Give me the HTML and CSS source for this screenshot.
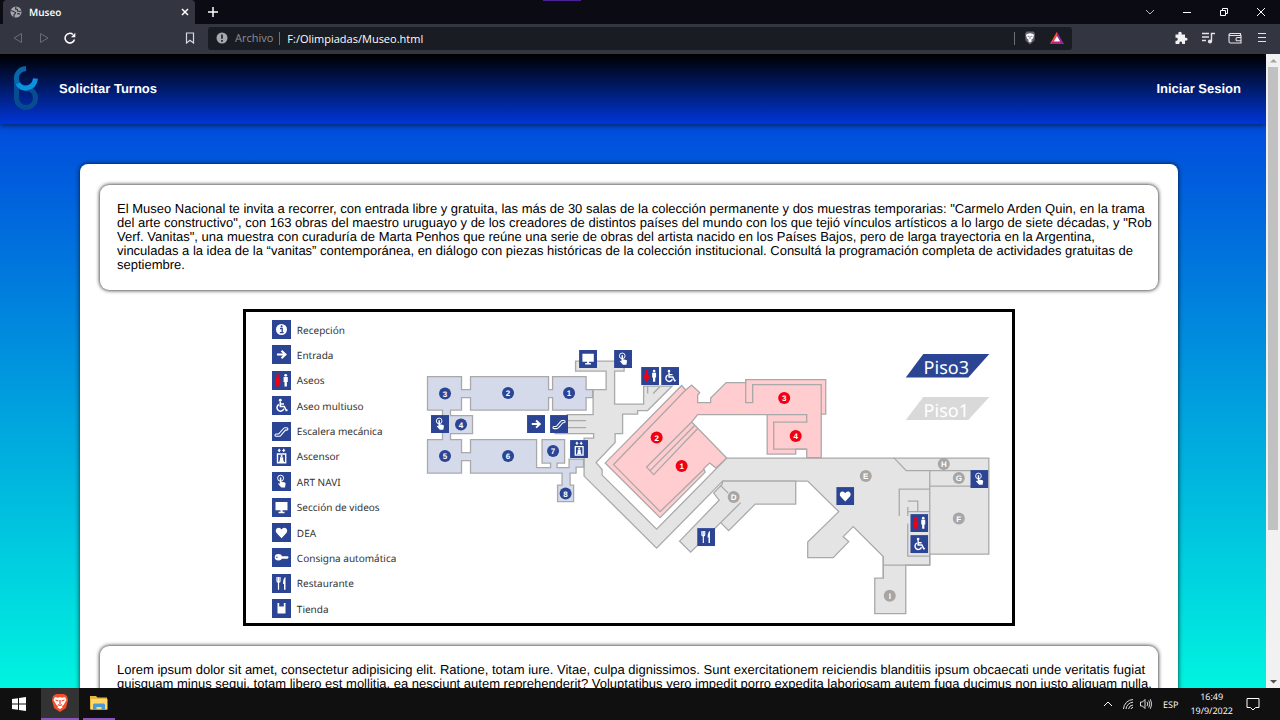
FILE: index.html
```html
<!DOCTYPE html>
<html lang="es">
<head>
<meta charset="utf-8">
<title>Museo</title>
<link rel="stylesheet" href="styles.css">
</head>
<body>
<svg class="defs" aria-hidden="true">
  <defs>
    <symbol id="i-info" viewBox="0 0 19 19"><rect width="19" height="19" fill="#2b4594"/><circle cx="9.500" cy="9.500" r="5.500" fill="#fff"/><path d="M8 8.500h2.200v4M7.800 12.700h3.800" stroke="#2b4594" stroke-width="1.300" fill="none"/><circle cx="9.600" cy="6.300" r="1" fill="#2b4594"/></symbol>
    <symbol id="i-arrow" viewBox="0 0 19 19"><rect width="19" height="19" fill="#2b4594"/><path d="M5 9.500h8M9.500 5.700l4 3.800-4 3.800" stroke="#fff" stroke-width="2" fill="none"/></symbol>
    <symbol id="i-wc" viewBox="0 0 19 19"><rect width="19" height="19" fill="#2b4594"/><circle cx="5.700" cy="4.500" r="1.600" fill="#f00010"/><path d="M5.700 4.500l3 5.500-1.900 5.500H4.600L2.700 10z" fill="#f00010"/><circle cx="13.700" cy="4.300" r="1.400" fill="#fff"/><path d="M11.600 6h4.200v5h-.9v4.500h-2.400V11h-.9z" fill="#fff"/></symbol>
    <symbol id="i-chair" viewBox="0 0 19 19"><rect width="19" height="19" fill="#2b4594"/><circle cx="8.300" cy="4.200" r="1.400" fill="#fff"/><path d="M8.300 5.500v5h4l2 4 1.200-.5M8.500 8h3.500M7 8.500a3.500 3.500 0 1 0 4.800 4.300" stroke="#fff" stroke-width="1.500" fill="none"/></symbol>
    <symbol id="i-stairs" viewBox="0 0 19 19"><rect width="19" height="19" fill="#2b4594"/><path d="M4.200 12h1.800q1 0 1.500-1l3.500-4q.8-1.300 2-1.300h1.700q1.200 0 1.200 1.200t-1.200 1.200h-1.200L9.500 12.700q-1 1.600-2.300 1.600h-3q-1.200 0-1.200-1.100t1.200-1.200z" stroke="#fff" stroke-width="1.100" fill="none"/></symbol>
    <symbol id="i-lift" viewBox="0 0 19 19"><rect width="19" height="19" fill="#2b4594"/><path d="M7.200 1.500l1.800 2.200H7.900v1.200H6.500V3.700H5.400zM11.700 5.200L9.900 3h1.100V1.800h1.400V3h1.100z" fill="#fff"/><path d="M5.500 7h8.200v8.800H5.500z" stroke="#fff" stroke-width="1.400" fill="none"/><circle cx="9.600" cy="9" r="1.100" fill="#fff"/><path d="M8 10.300h3.200v2.500l1 2.500H7l1-2.500z" fill="#fff"/></symbol>
    <symbol id="i-touch" viewBox="0 0 19 19"><rect width="19" height="19" fill="#2b4594"/><circle cx="8.600" cy="6.200" r="3" stroke="#fff" fill="none"/><path d="M7.800 5.800q.8-1 1.600 0v4l3.500.8q.8.300.7 1.200l-.6 3.700H9.300L6 11.700q.2-.9 1.800.1z" fill="#fff"/></symbol>
    <symbol id="i-tv" viewBox="0 0 19 19"><rect width="19" height="19" fill="#2b4594"/><path d="M3.500 4h12v8.300h-5v1.500h2v1.400h-6v-1.400h2v-1.500h-5z" fill="#fff"/></symbol>
    <symbol id="i-heart" viewBox="0 0 19 19"><rect width="19" height="19" fill="#2b4594"/><path d="M9.500 15.200L4.600 10C2.800 7.500 4.300 4.700 6.600 4.700q2 0 2.900 1.700.9-1.700 2.900-1.700c2.300 0 3.800 2.800 2 5.300z" fill="#fff"/></symbol>
    <symbol id="i-key" viewBox="0 0 19 19"><rect width="19" height="19" fill="#2b4594"/><ellipse cx="6.400" cy="9.300" rx="3.600" ry="3.200" fill="#fff"/><path d="M9 8.300h7l.6 1.200-1 1.200H9z" fill="#fff"/><circle cx="4.900" cy="9.300" r=".8" fill="#2b4594"/></symbol>
    <symbol id="i-fork" viewBox="0 0 19 19"><rect width="19" height="19" fill="#2b4594"/><path d="M5 3v4q0 1.200 1 1.200h1q1 0 1-1.200V3M6.500 3v12.800" stroke="#fff" stroke-width="1.200" fill="none"/><path d="M13.500 3v12.800h-1.500V10H11q0-6 2.500-7z" fill="#fff"/></symbol>
    <symbol id="i-shop" viewBox="0 0 19 19"><rect width="19" height="19" fill="#2b4594"/><path d="M5.500 4h1.700v3.500h4.600V4h1.700v10.500h-8z" fill="#fff"/></symbol>
  </defs>
</svg>

<header class="chrome">
  <div class="tabs">
    <div class="tab">
      <svg class="ic12" viewBox="0 0 12 12"><circle cx="6" cy="6" r="5.500" fill="#a6a8b0"/><path d="M1 4.500l2.500 1 2 1-.5 1.500-1 .5V11M6 1l-.5 2 2 .5V5l2 .5L11 5M7 8l2-.5.800 1" stroke="#333541" stroke-width="1.200" fill="none"/></svg>
      <span class="tab-title">Museo</span>
      <button class="bare" aria-label="Cerrar pestaña"><svg class="ic8" viewBox="0 0 8 8"><path d="M1 1l6 6M7 1L1 7" stroke="#fff" stroke-width="1.500"/></svg></button>
    </div>
    <button class="bare newtab" aria-label="Nueva pestaña"><svg class="ic10" viewBox="0 0 10 10"><path d="M5 0v10M0 5h10" stroke="#fff" stroke-width="1.500"/></svg></button>
    <span class="accent"></span>
    <div class="winbtns">
      <button class="bare" aria-label="Buscar pestañas"><svg class="ic10" viewBox="0 0 10 10"><path d="M1 3l4 4 4-4" stroke="#b5b5bb" fill="none"/></svg></button>
      <button class="bare" aria-label="Minimizar"><svg class="ic10" viewBox="0 0 10 10"><path d="M1 5.500h8" stroke="#fff"/></svg></button>
      <button class="bare" aria-label="Restaurar"><svg class="ic10" viewBox="0 0 10 10"><path d="M1.500 3.500h5v5h-5zM3.500 3V1.500h5v5H7" stroke="#fff" fill="none"/></svg></button>
      <button class="bare" aria-label="Cerrar"><svg class="ic10" viewBox="0 0 10 10"><path d="M1 1l8 8M9 1L1 9" stroke="#fff"/></svg></button>
    </div>
  </div>
  <div class="toolbar">
    <div class="nav-btns">
      <button class="bare" aria-label="Atrás"><svg class="ic12" viewBox="0 0 12 12"><path d="M9.500 1.500v9L2 6z" stroke="#696b76" fill="none"/></svg></button>
      <button class="bare" aria-label="Adelante"><svg class="ic12" viewBox="0 0 12 12"><path d="M2.500 1.500v9L10 6z" stroke="#696b76" fill="none"/></svg></button>
      <button class="bare" aria-label="Recargar"><svg class="ic12" viewBox="0 0 12 12"><path d="M10.500 7.500A4.800 4.800 0 1 1 9 2.500" stroke="#fff" stroke-width="1.500" fill="none"/><path d="M11.300.8v4.400H7z" fill="#fff"/></svg></button>
    </div>
    <button class="bare mark" aria-label="Marcador"><svg class="ic12" viewBox="0 0 12 12"><path d="M2.500 1h7v10L6 8.300 2.500 11z" stroke="#d8d9df" stroke-width="1.200" fill="none"/></svg></button>
    <div class="address">
      <svg class="ic12" viewBox="0 0 12 12"><circle cx="6" cy="6" r="5.500" fill="#a6a8b0"/><path d="M6 2.500v4.300M6 8v1.700" stroke="#191c22" stroke-width="1.600"/></svg>
      <label class="scheme" for="url">Archivo</label>
      <span class="sep"></span>
      <input id="url" class="url" type="text" value="F:/Olimpiadas/Museo.html">
      <span class="sep"></span>
      <svg class="ic14 shield" viewBox="0 0 14 14"><path d="M3.500.5h7l1.500 2-.5 7L7 13.500 2.500 9.500l-.5-7z" fill="#62646f"/><path d="M4 3l3-.7 3 .7 1 1-1 3.500L8 9l1 1-2 1.500L5 10l1-1-2-1.500L3 4z" fill="#fff"/><path d="M4.500 5l2 .5M9.500 5l-2 .5M7 6v2" stroke="#62646f" stroke-width=".8"/></svg>
      <svg class="ic14" viewBox="0 0 14 14"><path d="M7 .8L0 13h14z" fill="#862a91"/><path d="M7 .8V5L3.800 10.700 0 13z" fill="#ff4a2d"/><path d="M0 13l3.800-2.500h6.400L14 13z" fill="#b02387"/><path d="M7 5l-3.200 5.500h6.400z" fill="#fff"/></svg>
    </div>
    <div class="tools">
      <button class="bare" aria-label="Extensiones"><svg class="ic14" viewBox="0 0 14 14"><path d="M1.500 3.500h3C3.800 1.500 5 .8 6 .8s2.200.7 1.500 2.700H11v3.300c2-.6 2.500.5 2.500 1.400S12.700 10 11 9.500V13H8c.5-1.700-.3-2.500-1.200-2.500S5 11.300 5.500 13h-4V9.800c1.700.3 2.300-.6 2.300-1.500s-.8-1.700-2.300-1.400z" fill="#f2f2f4"/></svg></button>
      <button class="bare" aria-label="Reproducción"><svg class="ic14" viewBox="0 0 14 14"><path d="M1 2.500h7M1 6h7M1 9.500h4M10.500 10V2.500H14" stroke="#e4e4e8" stroke-width="1.400" fill="none"/><circle cx="9" cy="10.500" r="2.100" fill="#e4e4e8"/></svg></button>
      <button class="bare" aria-label="Cartera"><svg class="ic14" viewBox="0 0 14 14"><path d="M12.500 4.500v-2h-10q-1.500 0-1.500 1t1.500 1h10.500v7.500H2.500Q1 12 1 10.500v-7M13 6.500H9.500q-1.500 0-1.500 1.700t1.500 1.600H13" stroke="#e4e4e8" stroke-width="1.100" fill="none"/></svg></button>
      <button class="bare" aria-label="Menú"><svg class="ic14" viewBox="0 0 14 14"><path d="M3 2.500h8M3 6.500h8M3 10.500h8" stroke="#e4e4e8" stroke-width="1.200"/></svg></button>
    </div>
  </div>
</header>

<div class="viewport">
  <div class="page">
    <nav class="topnav">
      <svg class="logo" viewBox="0 0 28 46"><path d="M4.500 12v21a9.500 9.500 0 1 0 9.500-9.500" stroke="#074b91" stroke-width="5" fill="none"/><path d="M14 3.500C8 4 4 8.500 4.500 14q.7 8.500 9.500 9.500" stroke="#0866ab" stroke-width="5" fill="none"/><path d="M6 18.500q2.500 5 8.500 4.500 8-.8 9-9.500" stroke="#0a94df" stroke-width="5" fill="none"/></svg>
      <a class="navlink" href="#turnos">Solicitar Turnos</a>
      <a class="navlink login" href="#sesion">Iniciar Sesion</a>
    </nav>
    <main class="sheet">
      <p class="card">El Museo Nacional te invita a recorrer, con entrada libre y gratuita, las más de 30 salas de la colección permanente y dos muestras temporarias: "Carmelo Arden Quin, en la trama del arte constructivo", con 163 obras del maestro uruguayo y de los creadores de distintos países del mundo con los que tejió vínculos artísticos a lo largo de siete décadas, y "Rob Verf. Vanitas", una muestra con curaduría de Marta Penhos que reúne una serie de obras del artista nacido en los Países Bajos, pero de larga trayectoria en la Argentina, vinculadas a la idea de la “vanitas” contemporánea, en diálogo con piezas históricas de la colección institucional. Consultá la programación completa de actividades gratuitas de septiembre.</p>
      <figure class="map">
        <ul class="legend">
          <li><svg class="sign"><use href="#i-info"/></svg>Recepción</li>
          <li><svg class="sign"><use href="#i-arrow"/></svg>Entrada</li>
          <li><svg class="sign"><use href="#i-wc"/></svg>Aseos</li>
          <li><svg class="sign"><use href="#i-chair"/></svg>Aseo multiuso</li>
          <li><svg class="sign"><use href="#i-stairs"/></svg>Escalera mecánica</li>
          <li><svg class="sign"><use href="#i-lift"/></svg>Ascensor</li>
          <li><svg class="sign"><use href="#i-touch"/></svg>ART NAVI</li>
          <li><svg class="sign"><use href="#i-tv"/></svg>Sección de videos</li>
          <li><svg class="sign"><use href="#i-heart"/></svg>DEA</li>
          <li><svg class="sign"><use href="#i-key"/></svg>Consigna automática</li>
          <li><svg class="sign"><use href="#i-fork"/></svg>Restaurante</li>
          <li><svg class="sign"><use href="#i-shop"/></svg>Tienda</li>
        </ul>
        <svg class="plan" viewBox="420 312 592 311" role="img" aria-label="Plano del piso 3">
          <!-- halls -->
          <g class="hall">
            <path d="M575.500 361H624V371H614.500V404H643.500V386H672L647.500 410.500H637.500V414H622.500V433.500H615V442.500L596 462.500 602 469.500V475L656.500 529 726.500 458H988.500V554H929.500V565H905.500V613.500H874.500V578H883V556.500L853 526.500 843 536.500 848.500 541.500 833 557.500H807.500V542L838.500 511.500 807.500 481H722.500L656.500 548 584 476V438H593.500V433.500H555V430H567V414.500H593V389.500H606V371H575.500Z"/>
            <path d="M722.500 481H795.500V504H755L728.500 530.500 720.500 522.500 690.500 552 679.500 541 719 500 713.500 493 722 484Z"/>
          </g>
          <g class="line">
            <path d="M567 420.500H586M567 427.500H586M720.500 522.500L740.500 502.500M720 485L728 493M647.500 386V393.500M653 393.500L659.500 387"/>
            <path d="M893.500 457.500L906 470.500H988.500M929.500 470.500V565M929.500 486H988.500M899 516V489H929.500M907.500 501H917.500V511.500M907.500 507V516M907.500 511.500H929.500M907.500 523.500V556H929.500M883 565H929.500M883 556V578"/>
          </g>
          <!-- blue wing -->
          <path class="blue" d="M427.500 376.500H461.500V389.500H470.500V376.500H548.500V389.500H552.500V376.500H586V389.500H592.500V397.500H586V410H552.500V397.500H548.500V410H470.500V397.500H461.500V410H450.500V415.500H472.500V433.500H450.500V439.500H461.500V452.500H470.500V439.500H536.500V467.500H550.500V463H542V439.500H564.500V463H557V467.500H569V459H583.500V467H576V473H570V485H573.500V501.500H557.500V485H562V473H470.500V460.500H461.500V473H427.500V439.500H442.500V410H427.500Z"/>
          <!-- pink wing -->
          <path class="pink" d="M605 463L681.500 385.500 685.500 390 691.500 385 699.500 392.500 697.500 395V402.500H710.500V398L726 382.500H745.500V379.500H825.500V414H821V457.500H806.500V449H795.500V454H767V414.500H697.500L691.500 422 726.500 458 716 468 709.500 463 703.500 468.500 705 472 660 517.500Z"/>
          <g class="line">
            <path d="M685.500 390L613.500 464.500 660 511.500 704 469M691.500 422L646.500 467 653.500 474.500 697.500 428.500M650 470.500L694.500 425.500"/>
            <path d="M745.500 382V402.500H752.500V384.500H821V414M767 414.500H806.500V422H773.500V449H806.500"/>
          </g>
          <path d="M923 354H989L968 377.500H905.500Z" fill="#2b4594"/>
          <path d="M923 397H989L968 420H905.500Z" fill="#d9d9d9"/>
          <text class="floor" x="946" y="374">Piso3</text>
          <text class="floor" x="946" y="417">Piso1</text>
          <!-- room markers -->
          <g fill="#2b4594"><circle cx="445" cy="393.500" r="6"/><circle cx="508" cy="393" r="6"/><circle cx="569" cy="393" r="6"/><circle cx="461" cy="424.500" r="6"/><circle cx="445" cy="456" r="6"/><circle cx="508" cy="456" r="6"/><circle cx="553" cy="451" r="6"/><circle cx="565.500" cy="493.500" r="6"/></g>
          <g fill="#f00010"><circle cx="656.500" cy="437.500" r="6"/><circle cx="681.500" cy="466" r="6"/><circle cx="784" cy="398" r="6"/><circle cx="795.500" cy="436" r="6"/></g>
          <g fill="#a6a6a6"><circle cx="733.500" cy="497" r="6"/><circle cx="865.500" cy="476" r="6"/><circle cx="943.500" cy="464" r="6"/><circle cx="958.500" cy="478" r="6"/><circle cx="958.500" cy="518.500" r="6"/><circle cx="889.500" cy="595.500" r="6"/></g>
          <g class="num"><text x="445" y="397">3</text><text x="508" y="396">2</text><text x="569" y="396">1</text><text x="461" y="428">4</text><text x="445" y="459">5</text><text x="508" y="459">6</text><text x="553" y="454">7</text><text x="565.500" y="497">8</text><text x="656.500" y="441">2</text><text x="681.500" y="469">1</text><text x="784" y="401">3</text><text x="795.500" y="439">4</text><text x="733.500" y="500">D</text><text x="865.500" y="479">E</text><text x="943.500" y="467">H</text><text x="958.500" y="481">G</text><text x="958.500" y="522">F</text><text x="889.500" y="599">I</text></g>
          <!-- service signs -->
          <use href="#i-tv" x="579" y="350" width="18" height="18"/><use href="#i-touch" x="614" y="350" width="18" height="18"/>
          <use href="#i-wc" x="641" y="367" width="18" height="18"/><use href="#i-chair" x="661" y="367" width="18" height="18"/>
          <use href="#i-touch" x="431" y="415" width="18" height="18"/><use href="#i-arrow" x="527" y="415" width="18" height="18"/>
          <use href="#i-stairs" x="550" y="415" width="18" height="18"/><use href="#i-lift" x="570" y="440" width="18" height="18"/>
          <use href="#i-heart" x="836" y="487" width="18" height="18"/><use href="#i-touch" x="970" y="470" width="18" height="18"/>
          <use href="#i-wc" x="910" y="514" width="18" height="18"/><use href="#i-chair" x="910" y="535" width="18" height="18"/>
          <use href="#i-fork" x="697" y="528" width="18" height="18"/>
        </svg>
      </figure>
      <p class="card">Lorem ipsum dolor sit amet, consectetur adipisicing elit. Ratione, totam iure. Vitae, culpa dignissimos. Sunt exercitationem reiciendis blanditiis ipsum obcaecati unde veritatis fugiat quisquam minus sequi, totam libero est mollitia, ea nesciunt autem reprehenderit? Voluptatibus vero impedit porro expedita laboriosam autem fuga ducimus non iusto aliquam nulla.</p>
    </main>
  </div>
  <div class="scrollbar" aria-hidden="true">
    <svg class="arrow" viewBox="0 0 13 13"><path d="M3 8.500h7L6.500 5z" fill="#a3a3a3"/></svg>
    <span class="thumb"></span>
    <svg class="arrow" viewBox="0 0 13 13"><path d="M3 5h7L6.500 8.500z" fill="#505050"/></svg>
  </div>
</div>

<footer class="taskbar">
  <button class="bare task" aria-label="Inicio"><svg class="ic14" viewBox="0 0 14 14"><path d="M0 2l6-.8v5.300H0zM7 1l7-1v6.500H7zM0 7.500h6v5.300L0 12zM7 7.500h7V14l-7-1z" fill="#fff"/></svg></button>
  <button class="bare task current" aria-label="Brave"><svg class="ic20" viewBox="0 0 20 20"><path d="M6 1h8l3 2 1 4-2 8-6 4-6-4L2 7l1-4z" fill="#f2502a"/><path d="M5 4l3 .7L10 4l2 .7L15 4l1.500 3-3 5-1.500 1 .5 1.500L10 16l-2.500-1.500L8 13l-1.500-1-3-5z" fill="#fff"/><path d="M5.500 7l3 1M14.500 7l-3 1M10 7v4M8 11.500l2 1 2-1" stroke="#f2502a" stroke-width="1.300" fill="none"/></svg></button>
  <button class="bare task running" aria-label="Explorador de archivos"><svg class="ic20" viewBox="0 0 20 20"><path d="M1 3h6l1.500 1.500H18v12H1z" fill="#e9b440"/><path d="M2 6h16.500v10.500H2z" fill="#ffd868"/><path d="M4 17v-5q0-1.500 1.500-1.500h9q1.500 0 1.500 1.500v5h-3.500v-3h-5v3z" fill="#4a9bd1"/></svg></button>
  <div class="tray">
    <button class="bare" aria-label="Mostrar iconos ocultos"><svg class="ic10" viewBox="0 0 10 10"><path d="M1 7l4-4 4 4" stroke="#fff" fill="none"/></svg></button>
    <svg class="ic12" viewBox="0 0 12 12"><path d="M1.500 11A10 10 0 0 1 11 1.500M4 11a7.500 7.500 0 0 1 7-6.800M6.500 11A5 5 0 0 1 11 7M9 11q.5-1.500 2-1.700" stroke="#ddd" fill="none"/></svg>
    <svg class="ic12" viewBox="0 0 12 12"><path d="M.5 4h2L5 1.500v9L2.500 8h-2zM7 4q1.500 2 0 4M8.700 2.500q2.500 3.500 0 7M10.300 1.200q3 4.800 0 9.600" stroke="#eee" stroke-width=".9" fill="none"/></svg>
    <span class="lang">ESP</span>
    <time class="clock" datetime="2022-09-19T16:49"><span>16:49</span><span>19/9/2022</span></time>
    <button class="bare" aria-label="Notificaciones"><svg class="ic14" viewBox="0 0 14 14"><path d="M1 1.500h12v9H9.500L7 13l-2.500-2.500H1z" stroke="#fff" fill="none"/></svg></button>
  </div>
</footer>
</body>
</html>
```
FILE: styles.css
```css
* { box-sizing: border-box; }
body {
  margin: 0;
  height: 100vh;
  display: flex;
  flex-direction: column;
  overflow: hidden;
  font-family: "Liberation Sans", Arial, sans-serif;
  font-size: 13px;
  text-rendering: geometricPrecision;
}
.defs { position: absolute; width: 0; height: 0; }
.bare { border: 0; padding: 0; background: none; display: flex; align-items: center; justify-content: center; }
svg { display: block; flex: none; }
.ic8 { width: 8px; height: 8px; }
.ic10 { width: 10px; height: 10px; }
.ic12 { width: 12px; height: 12px; }
.ic14 { width: 14px; height: 14px; }
.ic20 { width: 20px; height: 20px; }

.chrome, .taskbar { font-family: "Open Sans", "Noto Sans", sans-serif; color: #fff; flex: none; }
.tabs { height: 24px; background: #0b0b14; display: flex; padding-left: 3px; }
.tab {
  width: 192px;
  display: flex;
  align-items: center;
  gap: 7px;
  padding: 0 6px 0 7px;
  background: #333541;
  border-radius: 4px 4px 0 0;
  font-size: 10px;
  font-weight: 600;
}
.tab-title { flex: 1; }
.newtab { width: 36px; }
.accent { width: 38px; height: 1px; margin-left: 312px; background: #4b1d96; }
.winbtns { margin-left: auto; display: flex; gap: 27px; padding-right: 14px; }
.toolbar { height: 30px; background: #333541; display: flex; align-items: center; padding: 0 11px 2px 12px; }
.nav-btns { display: flex; gap: 14px; }
.mark { margin-left: 108px; }
.address {
  flex: 1;
  height: 23px;
  margin: 0 102px 0 12px;
  padding: 0 8px;
  display: flex;
  align-items: center;
  background: #191c22;
  border-radius: 3px;
  font-size: 11px;
}
.scheme { color: #8d9097; margin-left: 7px; }
.sep { width: 1px; height: 13px; margin: 0 7px 0 6px; background: #6d7078; }
.url { flex: 1; min-width: 0; border: 0; padding: 0; background: none; color: #fff; font: inherit; outline: 0; }
.shield { margin: 0 13px 0 1px; }
.tools { display: flex; gap: 13px; }

.viewport { flex: 1; min-height: 0; display: flex; overflow: hidden; }
.page { flex: 1; overflow: hidden; background: linear-gradient(#0038dc, #00f4e0); }
.topnav {
  height: 70px;
  padding: 0 25px 2px 12px;
  display: flex;
  align-items: center;
  background: linear-gradient(#000, #0036d8);
  box-shadow: 0 1px 6px #000a;
}
.logo { width: 28px; height: 46px; }
.navlink { margin-left: 19px; color: #fff; font-size: 13px; font-weight: bold; text-decoration: none; }
.login { margin-left: auto; }
.sheet {
  margin: 40px 88px 0 80px;
  padding: 21px 20px;
  background: #fff;
  border-radius: 8px;
  box-shadow: 0 0 5px #000c;
}
.card {
  margin: 0;
  padding: 17px 5px 18px 17px;
  border-radius: 9px;
  box-shadow: 0 0 4px #000;
  line-height: 14px;
}
.map {
  width: 73%;
  margin: 19px auto 20px;
  display: flex;
  border: 3px solid #000;
  background: #fff;
}
.legend {
  width: 174px;
  flex: none;
  margin: 0;
  padding: 8px 0 5px 26px;
  list-style: none;
  display: flex;
  flex-direction: column;
  justify-content: space-between;
  font-family: "Noto Sans", sans-serif;
  font-size: 10px;
  color: #333;
}
.legend li { display: flex; align-items: center; gap: 6px; height: 19px; }
.sign { width: 19px; height: 19px; }
.plan { flex: 1; min-width: 0; }
.hall path { fill: #e4e4e4; stroke: #a9a9a9; }
.blue { fill: #d5daea; stroke: #a9a9a9; }
.pink { fill: #ffcccf; stroke: #a9a9a9; }
.line { fill: none; stroke: #a9a9a9; }
.hall path, .blue, .pink, .line { stroke-width: 1.3; }
.floor { fill: #fff; font: 18px "Noto Sans", sans-serif; text-anchor: middle; }
.num { fill: #fff; font: bold 8px "Liberation Sans", sans-serif; text-anchor: middle; }

.scrollbar { width: 14px; flex: none; display: flex; flex-direction: column; align-items: center; background: #f1f1f1; }
.arrow { width: 13px; height: 13px; }
.thumb { width: 10px; height: 73%; margin-bottom: auto; background: #c1c1c1; }

.taskbar { height: 32px; background: #101010; display: flex; }
.task { width: 38px; }
.current { width: 38px; margin-left: 3px; background: #333; border-bottom: 2px solid #8a55c0; }
.running { width: 32px; margin-left: 4px; border-bottom: 2px solid #8a55c0; }
.tray { margin-left: auto; display: flex; align-items: center; padding-right: 20px; font-size: 9px; }
.tray .ic12 { margin-left: 9px; }
.tray .ic12 + .ic12 { margin-left: 6px; }
.lang { margin: 0 12px 0 11px; }
.clock { display: flex; flex-direction: column; align-items: center; line-height: 14px; margin-right: 13px; }
```
